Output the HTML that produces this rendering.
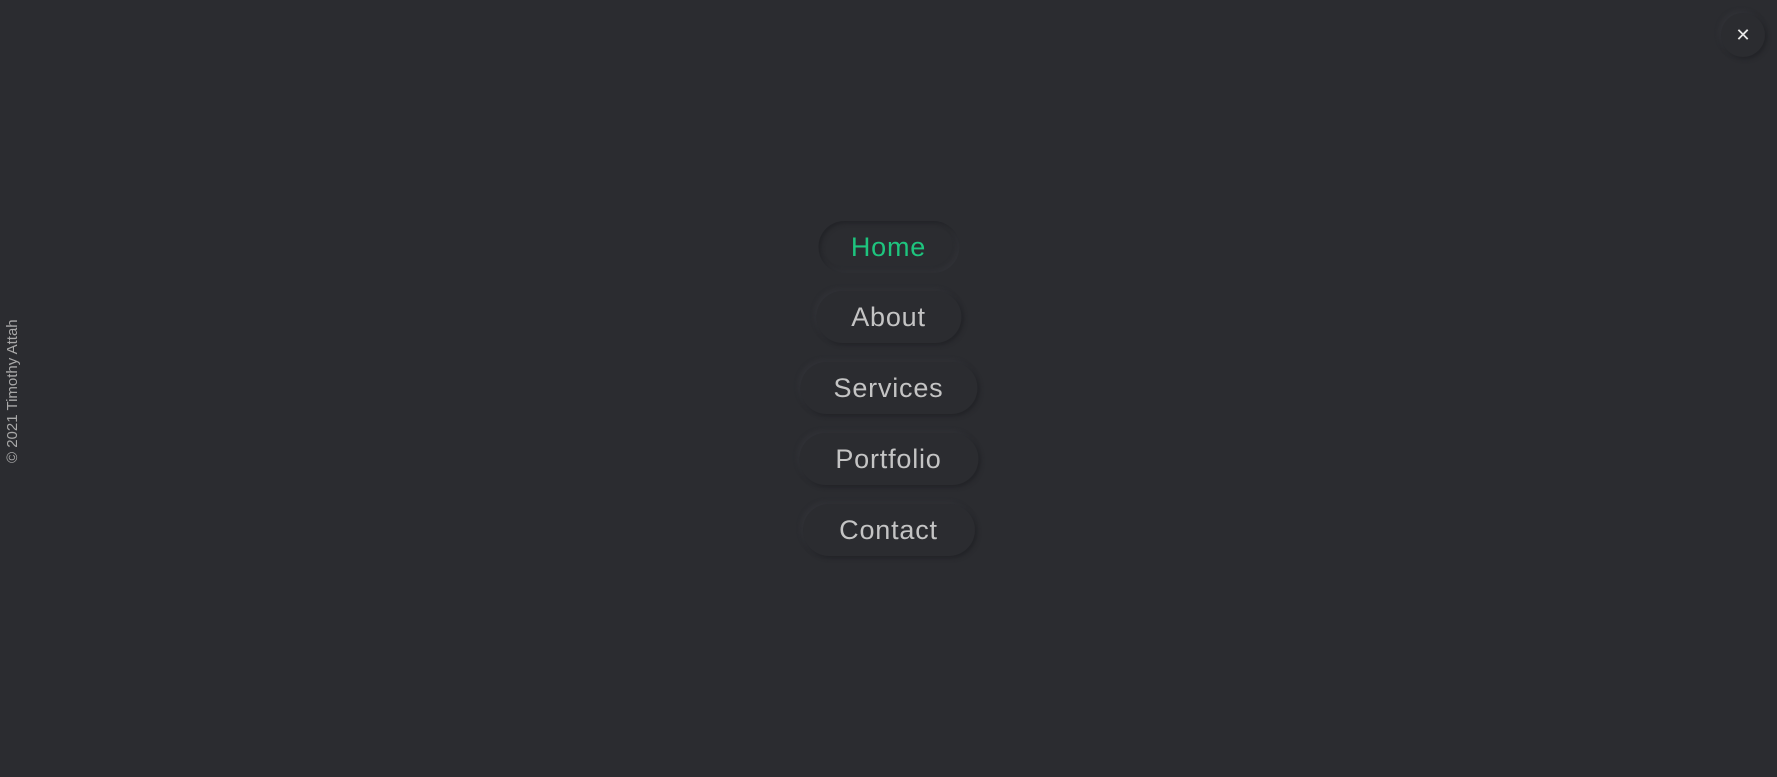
<!DOCTYPE html>
<html><head><style>
html,body{margin:0;width:1777px;height:777px;background:#2b2c30;overflow:hidden;font-family:"Liberation Sans",sans-serif;}
.b{position:absolute;height:52px;border-radius:26px;left:50%;transform:translateX(-50%);display:flex;align-items:center;justify-content:center;font-size:27px;letter-spacing:0.8px;color:#c4c4c4;box-sizing:border-box;
box-shadow:2px 2px 4px #222327,-2px -2px 4px #323338;}
.b.h{color:#1ec47e;box-shadow:inset 2px 2px 4px #222327,inset -2px -2px 4px #323338;}
.x{position:absolute;left:1721px;top:13px;width:44px;height:44px;border-radius:50%;box-shadow:2px 2px 4px #222327,-2px -2px 4px #323338;color:#e8e8e8;font-size:18px;display:flex;align-items:center;justify-content:center;}
.f{position:absolute;left:4px;top:463px;transform-origin:0 0;transform:rotate(-90deg);font-size:15px;color:#a8a8a8;white-space:nowrap;}
</style></head><body>
<div class="x">✕</div>
<div class="f">© 2021 Timothy Attah</div>
<div class="b h" style="top:221px;width:141px">Home</div>
<div class="b" style="top:291px;width:145px">About</div>
<div class="b" style="top:362px;width:177px">Services</div>
<div class="b" style="top:433px;width:179px">Portfolio</div>
<div class="b" style="top:504px;width:172px">Contact</div>
</body></html>
